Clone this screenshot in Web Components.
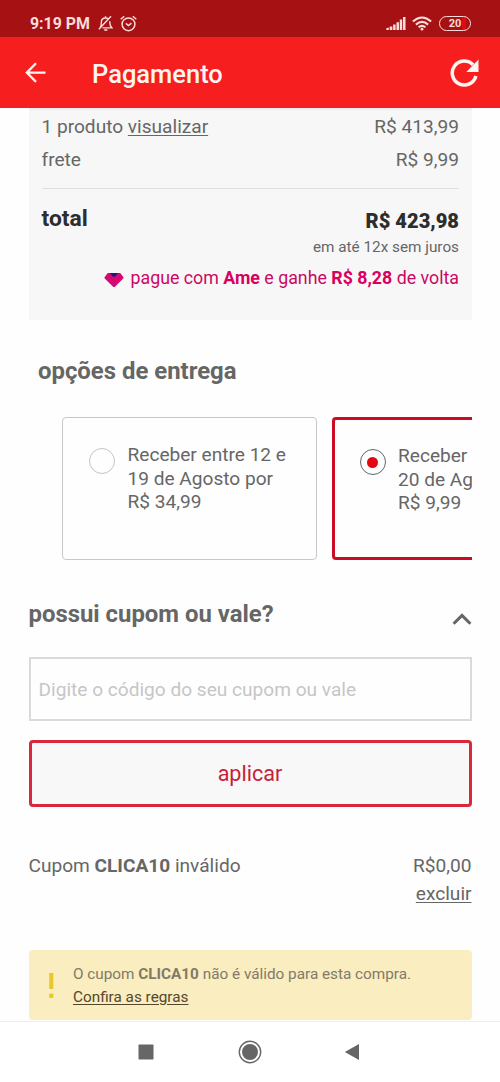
<!DOCTYPE html>
<html lang="pt-BR">
<head>
<meta charset="utf-8">
<title>Pagamento</title>
<style>
html,body{margin:0;height:100%;background:#fefefe}
body{font-family:Roboto,"Noto Sans",sans-serif;color:#666;font-size:19.1px;overflow:hidden}
</style>
</head>
<body>
<payment-screen></payment-screen>
<script>
const define=(name,html)=>{
  const t=document.createElement('template');
  t.innerHTML=html;
  customElements.define(name,class extends HTMLElement{
    constructor(){super();this.attachShadow({mode:'open'}).append(t.content.cloneNode(true));}
  });
};

define('status-bar',`
<style>
:host{display:flex;box-sizing:border-box;height:37px;background:#a61214;color:#fbdcd8;align-items:center;padding:9px 29px 0 30px}
.time{font-size:15.9px;font-weight:700;line-height:28px;width:60px;margin:1px 8px 0 0;white-space:nowrap}
svg{display:block;flex:none}
.gap{flex:1}
.battery{box-sizing:border-box;width:32px;height:15px;border:1.5px solid #fbdcd8;border-radius:8px;font-size:11px;font-weight:700;line-height:13px;text-align:center;margin-left:7px;background:linear-gradient(90deg,#a61214 72%,#e00b12 72% 88%,#a61214 88%)}
</style>
<span class="time">9:19 PM</span>
<svg width="15" height="17" viewBox="0 0 15 17" fill="none" stroke="#fbdcd8" stroke-width="1.4"><path d="M2 12.5C3.6 11 3.3 9 3.3 7.2C3.4 4.6 5 3 7.5 3C8.7 3 9.5 3.3 10.2 3.9M11.7 6.2C11.9 8.7 11.6 11 13.8 12.9H4.5M6.2 15H9.4M7.5 1.2V3M13 1.2L.9 14.3"/></svg>
<svg width="17" height="17" viewBox="0 0 17 17" fill="none" stroke="#fbdcd8" stroke-width="1.5" style="margin-left:7px"><circle cx="8.5" cy="9.3" r="6.4"/><path d="M5.8 8.4L8.5 10.6L11.4 8.2M.7 4.2L4.2 1.2M12.8 1.2L16.3 4.2"/></svg>
<span class="gap"></span>
<svg width="20" height="15" viewBox="0 0 20 15" fill="#fbdcd8"><path d="M.3 14V12.3L2.8 11.4V14zM3.7 14V10.5H6.3V14zM7.1 14V8.5H9.6V14zM10.5 14V6.2H13V14zM13.8 14V3.6H16.2V14zM17 14V1H19.5V14z"/></svg>
<svg width="20" height="15" viewBox="0 0 20 15" fill="none" stroke="#fbdcd8" stroke-width="2.1" style="margin-left:6px"><path d="M.9 5.5Q10 -2.5 19.1 5.5M3.9 8.6Q10 3.3 16.1 8.6M6.6 11.2Q10 8.4 13.4 11.2"/><circle cx="10" cy="13.2" r="1.4" fill="#fbdcd8" stroke="none"/></svg>
<span class="battery">20</span>`);

define('app-header',`
<style>
:host{display:flex;box-sizing:border-box;height:71px;background:#f71e20;color:#fff4f0;align-items:center;padding:1px 21px 0 25px}
h1{margin:1px auto 0 45px;font-size:25.5px;line-height:36px;font-weight:500;white-space:nowrap}
svg{display:block;flex:none}
</style>
<svg width="22" height="22" viewBox="0 0 22 22" fill="none" stroke="#fff4f0" stroke-width="2.3"><path d="M20.5 10.6H2M11 1.3L1.8 10.6L11 19.9"/></svg>
<h1><slot></slot></h1>
<svg width="29" height="30" viewBox="0 0 29 30"><path d="M25.9 18A12 12 0 1 1 23 6.8" fill="none" stroke="#fff4f0" stroke-width="3.5"/><path d="M28.5 1.5V14H16.3z" fill="#fff4f0"/></svg>`);

define('price-row',`
<style>
:host{display:flex;justify-content:space-between;height:33px;line-height:33px;white-space:nowrap}
</style><slot></slot><slot name="value"></slot>`);

define('order-summary',`
<style>
:host{display:block;box-sizing:border-box;height:212px;width:442.5px;margin-left:29px;padding:2px 12.5px 0;background:#f7f7f7;box-shadow:inset 0 3px 3px -2px #0001}
.total{display:flex;justify-content:space-between;border-top:1px solid #dedede;margin-top:12px;color:#2d2d2d;font-weight:700;height:46px}
.total span{font-size:22.8px;line-height:60px}
.total b{font-size:20.1px;line-height:64px}
.note{text-align:right;font-size:15.3px;line-height:24px}
.ame{display:flex;justify-content:flex-end;align-items:center;color:#cb0864;font-size:17.8px;line-height:26px;margin-top:6px;white-space:nowrap}
.ame svg{margin:3px 6px 0 0}
.ame b{color:#d9005f}
u{text-underline-offset:2px;text-decoration-thickness:1.4px}
</style>
<price-row><span>1 produto <u>visualizar</u></span><span slot="value">R$ 413,99</span></price-row>
<price-row><span>frete</span><span slot="value">R$ 9,99</span></price-row>
<div class="total"><span>total</span><b>R$ 423,98</b></div>
<div class="note">em até 12x sem juros</div>
<div class="ame"><svg width="20" height="16" viewBox="0 0 20 16"><path d="M3.8 1H16.2L19.5 5.3Q19.8 6 19 6.8L11.2 14.5Q10 15.5 8.8 14.5L1 6.8Q.2 6 .5 5.3z" fill="#d60872"/><path d="M6 1H14L11.5 4.2Q10 5.5 8.5 4.2z" fill="#25147c"/></svg><span>pague com <b>Ame</b> e ganhe <b>R$ 8,28</b> de volta</span></div>`);

define('delivery-option',`
<style>
:host{display:flex;box-sizing:border-box;flex:none;width:255px;height:143px;border:1.5px solid #c8c8c8;border-radius:4px;padding:25px 0 0 26px;line-height:23.5px;font-size:19.1px;white-space:pre}
.radio{box-sizing:border-box;flex:none;width:26px;height:26px;border:1.5px solid #c4c4c4;border-radius:50%;margin:5px 12.5px 0 0;display:grid;place-items:center}
:host([selected]){border:3px solid #cc0c22;padding:24px 0 0 24.5px}
:host([selected]) .radio{border-color:#666;margin-top:5px}
:host([selected]) .radio::after{content:"";width:11px;height:11px;border-radius:50%;background:#e40612}
</style><span class="radio"></span><span><slot></slot></span>`);

define('delivery-options',`
<style>
:host{display:block;width:471.5px;overflow:hidden;padding-top:33px}
h2{margin:0 0 27px 38px;font-size:23.9px;line-height:37px;font-weight:700}
.list{display:flex;gap:15px;padding-left:62px}
</style>
<h2>opções de entrega</h2>
<div class="list"><delivery-option>Receber entre 12 e
19 de Agosto por
R$ 34,99</delivery-option><delivery-option selected>Receber entre 13 e
20 de Agosto por
R$ 9,99</delivery-option></div>`);

define('coupon-form',`
<style>
:host{display:block;margin:35px 28.5px 0}
header{display:flex;justify-content:space-between;height:62px}
h2{margin:0;font-size:23.9px;line-height:38px;font-weight:700}
header svg{margin-top:17px}
input{display:block;box-sizing:border-box;width:100%;height:64px;border:2px solid #dadada;background:none;padding:1px 8px 0;font:19.1px Roboto,sans-serif;color:#555;outline:0;border-radius:0}
input::placeholder{color:#c6c6c6;opacity:1}
button{display:block;box-sizing:border-box;width:100%;height:67px;margin-top:19px;border:3px solid #d9283c;border-radius:4px;background:#f8f8f8;color:#c71f38;font:21.6px Roboto,sans-serif;padding:0}
</style>
<header><h2>possui cupom ou vale?</h2><svg width="20" height="14" viewBox="0 0 20 14" fill="none" stroke="#666" stroke-width="3"><path d="M1.6 11.8L10 3.4L18.4 11.8"/></svg></header>
<input placeholder="Digite o código do seu cupom ou vale">
<button>aplicar</button>`);

define('coupon-result',`
<style>
:host{display:flex;justify-content:space-between;margin:45px 28.5px 0;height:98px;line-height:28px}
.right{text-align:right}
u{text-underline-offset:2px;text-decoration-thickness:1.4px}
</style><span>Cupom <b>CLICA10</b> inválido</span><span class="right">R$0,00<br><u>excluir</u></span>`);

define('coupon-warning',`
<style>
:host{display:flex;box-sizing:border-box;margin:0 28.5px;height:70px;border-radius:4px;background:#faedbf;padding:12.5px 0 0 19px;font-size:15.3px;line-height:23px;color:#827a69}
svg{flex:none;margin:9.5px 18.5px 0 0}
u{color:#55472c;text-underline-offset:1.5px;text-decoration-thickness:1.2px}
</style>
<svg width="7" height="27" viewBox="0 0 7 27" fill="#e8c92d"><path d="M1.2 1H5.3V17H1.2zM1.2 21.5H5.3V26H1.2z"/></svg>
<span>O cupom <b>CLICA10</b> não é válido para esta compra.<br><u>Confira as regras</u></span>`);

define('nav-bar',`
<style>
:host{display:flex;box-sizing:border-box;height:61px;margin-top:auto;border-top:1px solid #ededed;justify-content:space-between;align-items:center;padding:0 140px 0 138px;background:#fff}
svg{display:block}
svg:nth-of-type(2){margin-left:1px}
</style>
<svg width="16" height="16" viewBox="0 0 16 16"><rect x=".5" y=".5" width="15" height="15" rx=".7" fill="#666"/></svg>
<svg width="24" height="24" viewBox="0 0 24 24"><circle cx="12" cy="12" r="10.7" fill="none" stroke="#666" stroke-width="1.4"/><circle cx="12" cy="12" r="8" fill="#666"/></svg>
<svg width="16" height="18" viewBox="0 0 16 18"><path d="M15 1V17L.8 9z" fill="#666"/></svg>`);

define('payment-screen',`
<style>:host{display:flex;flex-direction:column;width:500px;height:1082px}status-bar,app-header,nav-bar{flex:none}</style>
<status-bar></status-bar>
<app-header>Pagamento</app-header>
<order-summary></order-summary>
<delivery-options></delivery-options>
<coupon-form></coupon-form>
<coupon-result></coupon-result>
<coupon-warning></coupon-warning>
<nav-bar></nav-bar>`);
</script>
</body>
</html>
